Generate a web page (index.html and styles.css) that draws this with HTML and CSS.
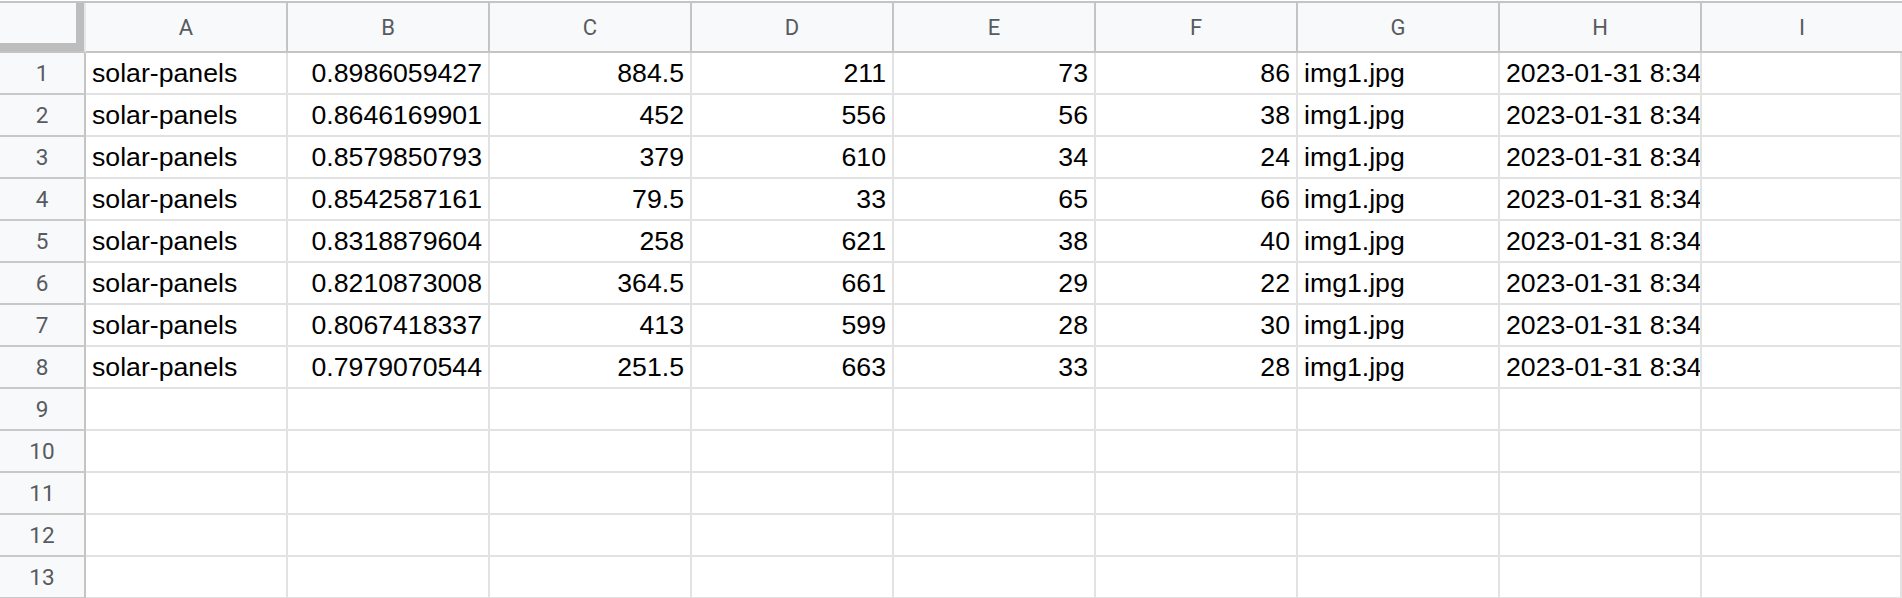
FILE: index.html
```html
<!DOCTYPE html>
<html>
<head>
<meta charset="utf-8">
<link rel="stylesheet" href="styles.css">
</head>
<body>
<div class="sheet">
  <div class="grid">
    <div class="corner"></div>
    <div class="ch">A</div><div class="ch">B</div><div class="ch">C</div><div class="ch">D</div><div class="ch">E</div><div class="ch">F</div><div class="ch">G</div><div class="ch">H</div><div class="ch last">I</div>

    <div class="rh">1</div><div class="c">solar-panels</div><div class="c n">0.8986059427</div><div class="c n">884.5</div><div class="c n">211</div><div class="c n">73</div><div class="c n">86</div><div class="c">img1.jpg</div><div class="c">2023-01-31 8:34</div><div class="c"></div>
    <div class="rh">2</div><div class="c">solar-panels</div><div class="c n">0.8646169901</div><div class="c n">452</div><div class="c n">556</div><div class="c n">56</div><div class="c n">38</div><div class="c">img1.jpg</div><div class="c">2023-01-31 8:34</div><div class="c"></div>
    <div class="rh">3</div><div class="c">solar-panels</div><div class="c n">0.8579850793</div><div class="c n">379</div><div class="c n">610</div><div class="c n">34</div><div class="c n">24</div><div class="c">img1.jpg</div><div class="c">2023-01-31 8:34</div><div class="c"></div>
    <div class="rh">4</div><div class="c">solar-panels</div><div class="c n">0.8542587161</div><div class="c n">79.5</div><div class="c n">33</div><div class="c n">65</div><div class="c n">66</div><div class="c">img1.jpg</div><div class="c">2023-01-31 8:34</div><div class="c"></div>
    <div class="rh">5</div><div class="c">solar-panels</div><div class="c n">0.8318879604</div><div class="c n">258</div><div class="c n">621</div><div class="c n">38</div><div class="c n">40</div><div class="c">img1.jpg</div><div class="c">2023-01-31 8:34</div><div class="c"></div>
    <div class="rh">6</div><div class="c">solar-panels</div><div class="c n">0.8210873008</div><div class="c n">364.5</div><div class="c n">661</div><div class="c n">29</div><div class="c n">22</div><div class="c">img1.jpg</div><div class="c">2023-01-31 8:34</div><div class="c"></div>
    <div class="rh">7</div><div class="c">solar-panels</div><div class="c n">0.8067418337</div><div class="c n">413</div><div class="c n">599</div><div class="c n">28</div><div class="c n">30</div><div class="c">img1.jpg</div><div class="c">2023-01-31 8:34</div><div class="c"></div>
    <div class="rh">8</div><div class="c">solar-panels</div><div class="c n">0.7979070544</div><div class="c n">251.5</div><div class="c n">663</div><div class="c n">33</div><div class="c n">28</div><div class="c">img1.jpg</div><div class="c">2023-01-31 8:34</div><div class="c"></div>
    <div class="rh">9</div><div class="c"></div><div class="c"></div><div class="c"></div><div class="c"></div><div class="c"></div><div class="c"></div><div class="c"></div><div class="c"></div><div class="c"></div>
    <div class="rh">10</div><div class="c"></div><div class="c"></div><div class="c"></div><div class="c"></div><div class="c"></div><div class="c"></div><div class="c"></div><div class="c"></div><div class="c"></div>
    <div class="rh">11</div><div class="c"></div><div class="c"></div><div class="c"></div><div class="c"></div><div class="c"></div><div class="c"></div><div class="c"></div><div class="c"></div><div class="c"></div>
    <div class="rh">12</div><div class="c"></div><div class="c"></div><div class="c"></div><div class="c"></div><div class="c"></div><div class="c"></div><div class="c"></div><div class="c"></div><div class="c"></div>
    <div class="rh">13</div><div class="c"></div><div class="c"></div><div class="c"></div><div class="c"></div><div class="c"></div><div class="c"></div><div class="c"></div><div class="c"></div><div class="c"></div>
  </div>
</div>
</body>
</html>
```

FILE: styles.css
```css
* { box-sizing: border-box; }

html, body {
  margin: 0;
  padding: 0;
  background: #ffffff;
  overflow: hidden;
}

.sheet {
  padding-top: 1px;
  width: 1902px;
  height: 598px;
  overflow: hidden;
}

.grid {
  display: grid;
  grid-template-columns: 86px repeat(8, 202px) 1fr;
  grid-template-rows: 50px repeat(13, 42px);
  border-top: 2px solid #c4c4c4;
}

.corner {
  background: #f8f9fa;
  border-right: 2px solid #e6e7e8;
  border-bottom: 2px solid #c4c4c4;
  box-shadow: inset -8px -8px 0 #bdbdbd;
}

.ch {
  background: #f8f9fa;
  border-right: 2px solid #c4c4c4;
  border-bottom: 2px solid #c4c4c4;
  display: flex;
  align-items: center;
  justify-content: center;
  font-family: Roboto, "Liberation Sans", sans-serif;
  font-size: 22px;
  color: #575b60;
}

.ch.last { border-right: none; }

.rh {
  background: #f8f9fa;
  border-right: 2px solid #c4c4c4;
  border-bottom: 2px solid #c9c9c9;
  display: flex;
  align-items: center;
  justify-content: center;
  font-family: Roboto, "Liberation Sans", sans-serif;
  font-size: 22.5px;
  color: #575b60;
}

.c {
  border-right: 2px solid #e2e2e2;
  border-bottom: 2px solid #e2e2e2;
  display: flex;
  align-items: center;
  padding: 0 6px 0 6px;
  overflow: hidden;
  white-space: nowrap;
  font-family: "Liberation Sans", Arial, sans-serif;
  font-size: 26.667px;
  line-height: 1.15;
  color: #000000;
}

.c.n { justify-content: flex-end; }
```
